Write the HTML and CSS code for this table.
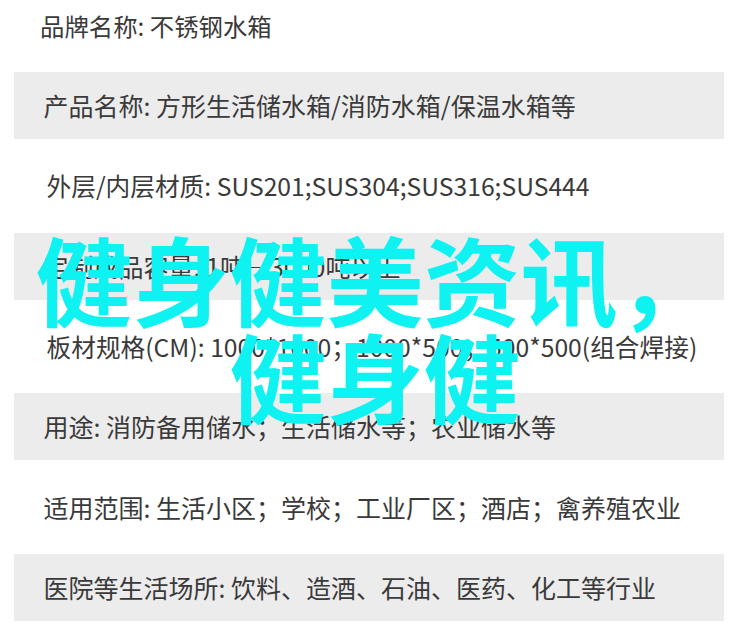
FILE: index.html
```html
<!DOCTYPE html>
<html lang="zh-CN">
<head>
    <meta charset="UTF-8">
    <meta name="viewport" content="width=device-width, initial-scale=1.0">
    <title>不锈钢水箱 产品参数</title>
    <link rel="stylesheet" href="styles.css">
</head>
<body>
    <div class="page">
        <ul class="spec-list">
            <li class="spec-row spec-row--tight">品牌名称: 不锈钢水箱</li>
            <li class="spec-row">产品名称: 方形生活储水箱/消防水箱/保温水箱等</li>
            <li class="spec-row spec-row--deep">外层/内层材质: SUS201;SUS304;SUS316;SUS444</li>
            <li class="spec-row">定制成品容量: 1吨—3000吨以上</li>
            <li class="spec-row spec-row--deep">板材规格(CM): 1000*1000；1000*500；500*500(组合焊接)</li>
            <li class="spec-row">用途: 消防备用储水；生活储水等；农业储水等</li>
            <li class="spec-row">适用范围: 生活小区；学校；工业厂区；酒店；禽养殖农业</li>
            <li class="spec-row">医院等生活场所: 饮料、造酒、石油、医药、化工等行业</li>
        </ul>

        <div class="watermark">健身健美资讯，健身健</div>
    </div>
</body>
</html>
```

FILE: styles.css
```css
* {
    margin: 0;
    padding: 0;
    box-sizing: border-box;
}

body {
    font-family: 'Noto Sans CJK SC', 'Noto Sans', sans-serif;
    background: #ffffff;
    overflow: hidden;
}

.page {
    position: relative;
    width: 750px;
    height: 638px;
    overflow: hidden;
}

.spec-list {
    list-style: none;
    display: flex;
    flex-direction: column;
    gap: 13.33px;
    margin-top: -8.33px;
}

.spec-row {
    height: 67px;
    line-height: 67px;
    margin: 0 26px 0 14px;
    padding-left: 29.5px;
    font-size: 25px;
    color: #3a3a3a;
    white-space: nowrap;
}

.spec-row:nth-child(even) {
    background: #ececec;
}

.spec-row--tight {
    padding-left: 26px;
    font-size: 24.4px;
}

.spec-row--deep {
    padding-left: 32.5px;
    font-size: 24.7px;
}

/* big cyan caption lying over the table */
.watermark {
    position: absolute;
    top: 228px;
    left: 30px;
    right: 30px;
    text-align: center;
    font-size: 97px;
    line-height: 97px;
    font-weight: 700;
    color: #0ff2f2;
}
```
